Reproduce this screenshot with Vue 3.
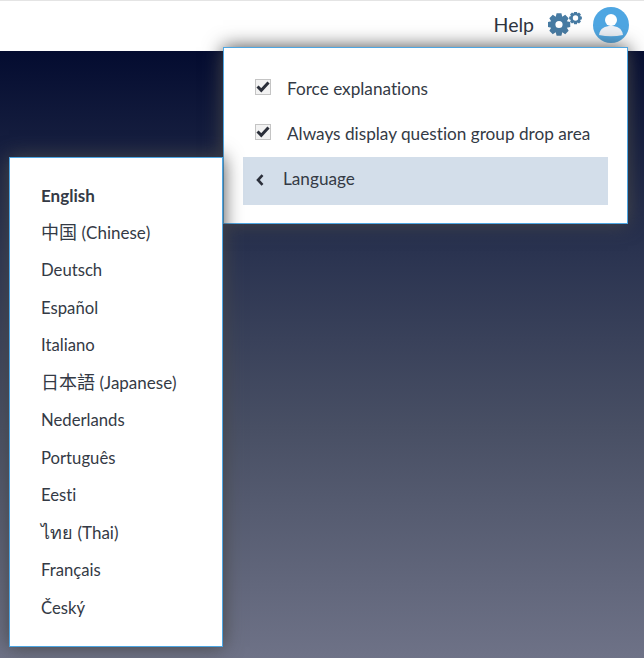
<script setup>
const languages = [
  { label: 'English', active: true },
  { label: '中国', note: '(Chinese)', big: true },
  { label: 'Deutsch' },
  { label: 'Español' },
  { label: 'Italiano' },
  { label: '日本語', note: '(Japanese)', big: true },
  { label: 'Nederlands' },
  { label: 'Português' },
  { label: 'Eesti' },
  { label: 'ไทย', note: '(Thai)', big: true },
  { label: 'Français' },
  { label: 'Český' },
]
const options = ['Force explanations', 'Always display question group drop area']

// teeth outline plus a round hole, filled with evenodd
function gear(cx, cy, outer, inner, teeth, hole) {
  const pts = []
  const step = (Math.PI * 2) / teeth
  for (let i = 0; i < teeth; i++) {
    const a = i * step - Math.PI / 2
    const spots = [[-0.5, inner], [-0.27, outer], [0.27, outer], [0.5, inner]]
    for (const [off, r] of spots) {
      const t = a + off * step
      pts.push(`${(cx + r * Math.cos(t)).toFixed(2)} ${(cy + r * Math.sin(t)).toFixed(2)}`)
    }
  }
  const ring = `M${cx - hole} ${cy}a${hole} ${hole} 0 1 0 ${hole * 2} 0a${hole} ${hole} 0 1 0 ${-hole * 2} 0z`
  return `M${pts.join('L')}z${ring}`
}
const bigGear = gear(11, 12.5, 11.5, 8.5, 8, 3.6)
const smallGear = gear(27.5, 6, 6.5, 4.9, 8, 2.7)
</script>

<template>
  <div class="page">
    <header class="topbar">
      <span class="help">Help</span>
      <svg class="gears" width="35" height="25" viewBox="0 0 35 25">
        <path :d="bigGear" fill="#477ba3" fill-rule="evenodd" />
        <path :d="smallGear" fill="#477ba3" fill-rule="evenodd" />
      </svg>
      <svg class="avatar" width="36" height="36" viewBox="0 0 36 36">
        <circle cx="18" cy="18" r="18" fill="#4ea6e2" />
        <circle cx="18" cy="13" r="6" fill="#fff" />
        <path d="M6 28C7 21 12 19 18 19S29 21 30 28Q18 30.500 6 28z" fill="#eef2f8" />
      </svg>
    </header>

    <main class="backdrop"></main>

    <div class="menu settings">
      <label v-for="o in options" :key="o" class="option">
        <span class="box">
          <svg width="14" height="14" viewBox="0 0 14 14">
            <path d="M1.500 6.500l3.800 3.800L12.500 2.500" fill="none" stroke="#2b2f3a" stroke-width="3" />
          </svg>
        </span>
        {{ o }}
      </label>
      <div class="submenu">
        <svg width="8" height="12" viewBox="0 0 8 12">
          <path d="M6.500 1.200L2 6l4.500 4.800" fill="none" stroke="#2b2f3a" stroke-width="2.600" />
        </svg>
        <span>Language</span>
      </div>
    </div>

    <ul class="menu languages">
      <li v-for="l in languages" :key="l.label" :class="{ active: l.active, noted: l.note }">
        <span :class="{ big: l.big }">{{ l.label }}</span>
        <span v-if="l.note" class="note">{{ l.note }}</span>
      </li>
    </ul>
  </div>
</template>

<style scoped>
.page {
  position: relative;
  width: 644px;
  height: 658px;
  overflow: hidden;
  display: flex;
  flex-direction: column;
  font-family: Lato, "Noto Sans CJK SC", sans-serif;
  font-variant-ligatures: none;
  color: #343a45;
}

.topbar {
  flex: none;
  height: 50px;
  background: #fff;
  border-top: 1px solid #e4e4e4;
  display: flex;
  align-items: center;
  justify-content: flex-end;
  padding-right: 15px;
}

.help {
  font-size: 19.500px;
  color: #2e3440;
  margin-right: 14px;
  margin-bottom: 3px;
}

.gears {
  margin-right: 10px;
  margin-bottom: 3px;
}

.avatar {
  margin-bottom: 3px;
}

.backdrop {
  flex: 1;
  background: linear-gradient(#040c30, #2a3350 33%, #484f64 62%, #6e7287);
}

.menu {
  position: absolute;
  box-sizing: border-box;
  background: #fff;
  border: 1px solid #4ea6e2;
  box-shadow: 0 0 18px #484848;
  margin: 0;
  list-style: none;
}

.settings {
  left: 223px;
  top: 47px;
  width: 405px;
  height: 177px;
  padding: 18px 19px 0;
}

.option {
  display: flex;
  align-items: center;
  height: 45px;
  font-size: 17.200px;
  padding-left: 12px;
}

.box {
  width: 14px;
  height: 14px;
  border: 1px solid #c4c4c4;
  background: #f2f2f2;
  margin-right: 16px;
  margin-bottom: 3px;
  display: flex;
}

.submenu {
  height: 48px;
  margin-top: 1px;
  background: #d3deea;
  display: flex;
  align-items: center;
  padding-left: 13px;
  font-size: 17.200px;
}

.submenu svg {
  margin-bottom: 2px;
}

.submenu span {
  margin-left: 19px;
  margin-bottom: 5px;
}

.languages {
  left: 9px;
  top: 157px;
  width: 214px;
  height: 490px;
  padding: 19px 0 0 31px;
}

.languages li {
  height: 37.500px;
  line-height: 39.500px;
  font-size: 16.700px;
  white-space: nowrap;
}

.languages li.noted {
  line-height: 37.500px;
}

.languages li.active {
  height: 36.500px;
  line-height: 37.500px;
  font-size: 17px;
  font-weight: 700;
}

.big {
  font-size: 18px;
}

.note {
  font-size: 17px;
  margin-left: 4.500px;
}
</style>
